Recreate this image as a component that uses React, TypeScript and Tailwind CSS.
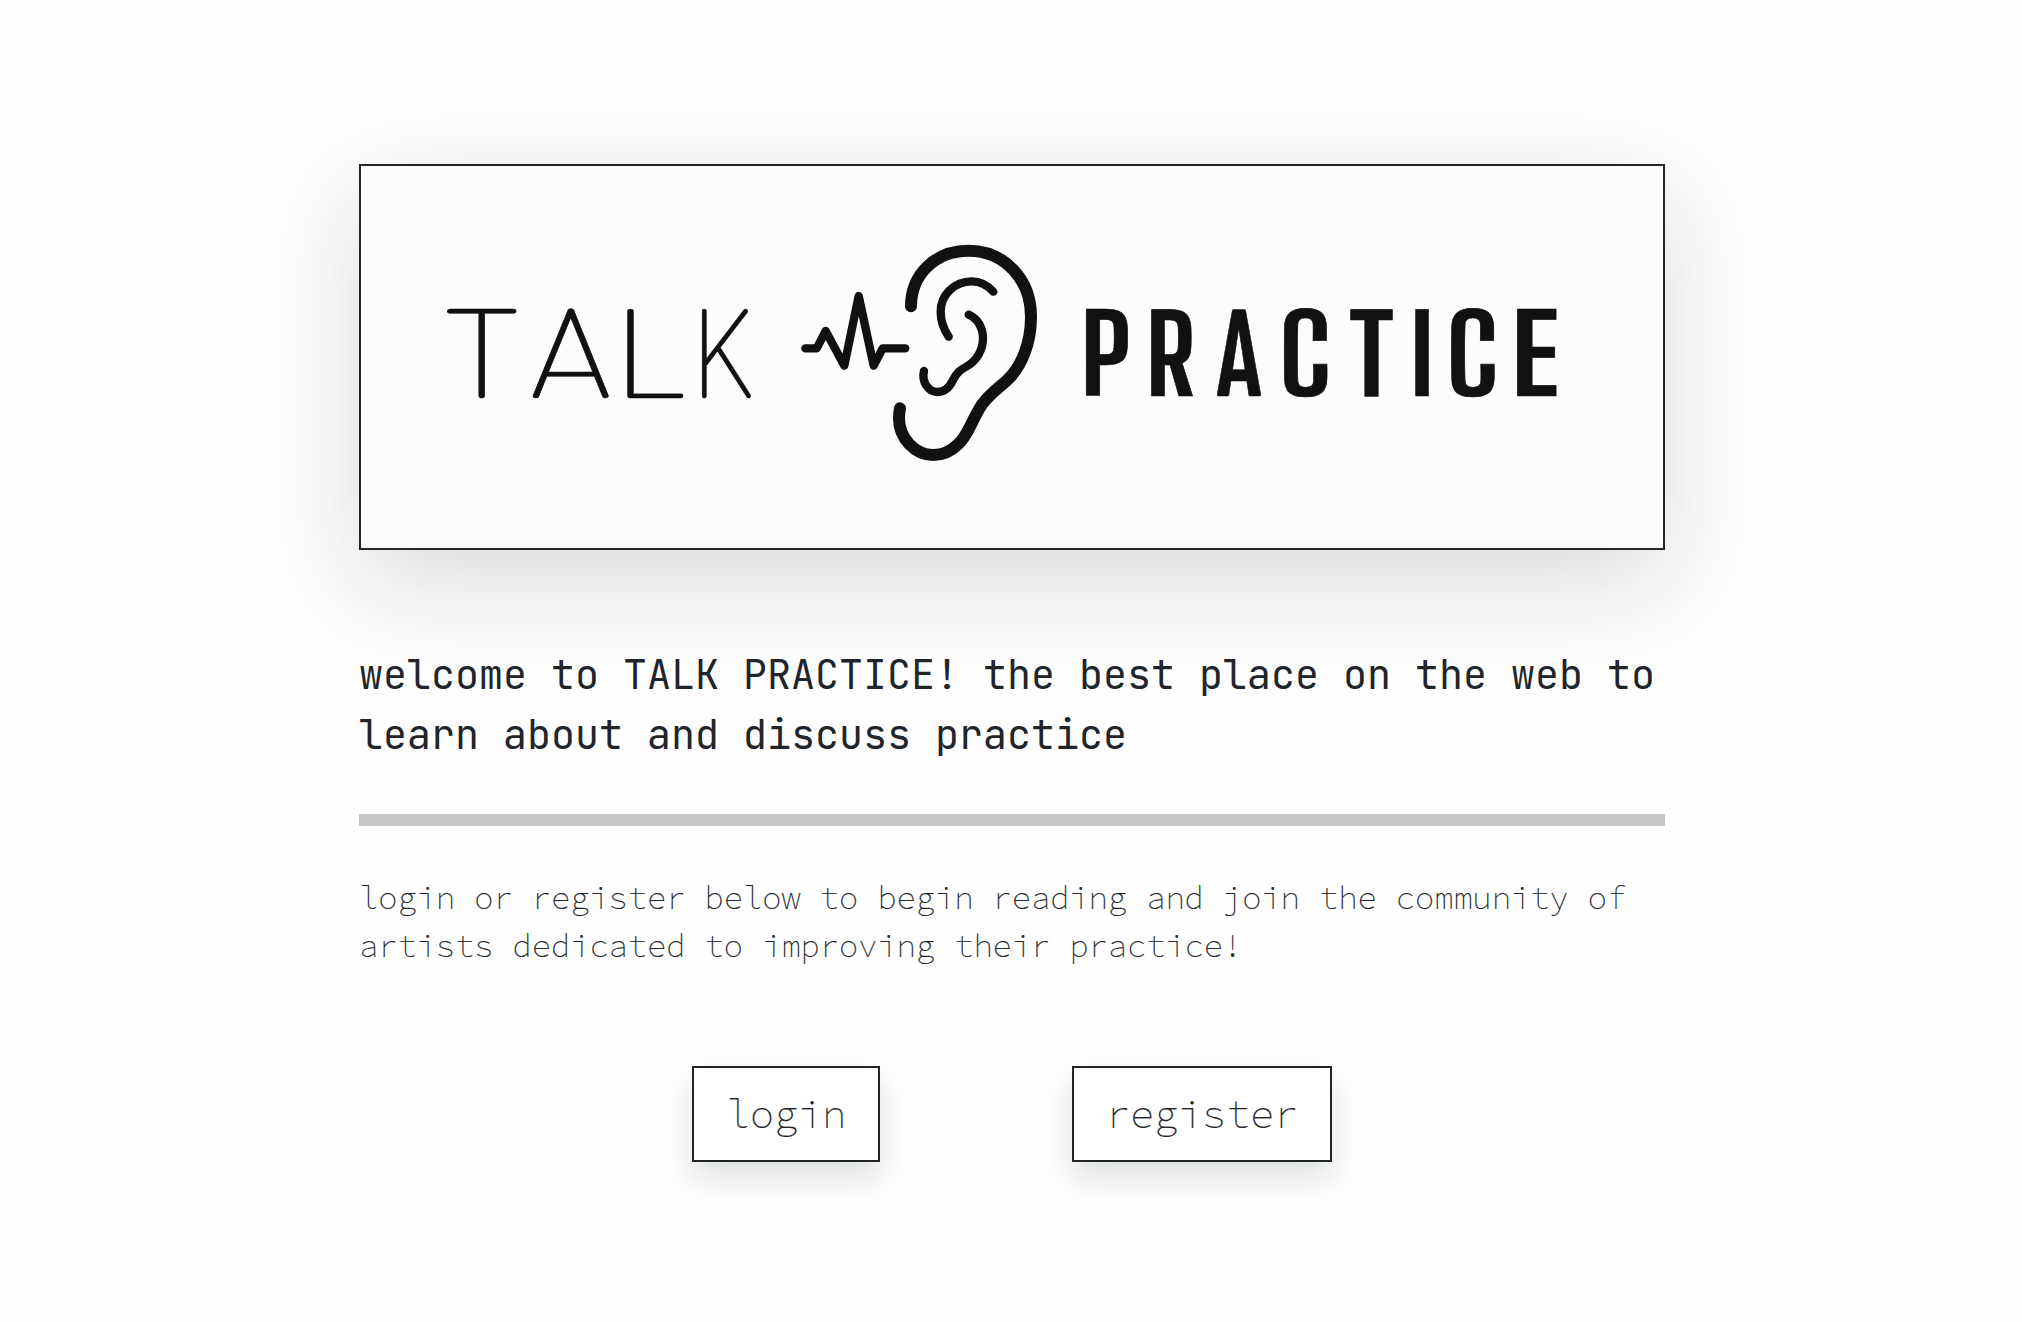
type Letter = { glyph: string; x: number; sx: number };

const talk: Letter[] = [
  { glyph: "T", x: 445, sx: 1.33 },
  { glyph: "A", x: 529, sx: 1.32 },
  { glyph: "L", x: 614.8, sx: 1.285 },
  { glyph: "K", x: 692.5, sx: 0.96 },
];

const practice: (Letter & { face: string })[] = [
  { glyph: "P", x: 1080.5, sx: 1.155, face: "font-['Big_Shoulders_Display','Roboto',sans-serif] text-[107.5px] font-bold" },
  { glyph: "R", x: 1146.1, sx: 1.11, face: "font-['Big_Shoulders_Display','Roboto',sans-serif] text-[107.5px] font-bold" },
  { glyph: "A", x: 1215.8, sx: 0.83, face: "font-['Barlow_Condensed','Roboto',sans-serif] text-[122.6px] font-semibold" },
  { glyph: "C", x: 1279.2, sx: 1.15, face: "font-['Big_Shoulders_Display','Roboto',sans-serif] text-[107.5px] font-bold" },
  { glyph: "T", x: 1350, sx: 1.145, face: "font-['Big_Shoulders_Display','Roboto',sans-serif] text-[107.5px] font-bold" },
  { glyph: "I", x: 1410.2, sx: 1.09, face: "font-['Big_Shoulders_Display','Roboto',sans-serif] text-[107.5px] font-bold" },
  { glyph: "C", x: 1446.5, sx: 1.15, face: "font-['Big_Shoulders_Display','Roboto',sans-serif] text-[107.5px] font-bold" },
  { glyph: "E", x: 1511.3, sx: 1.255, face: "font-['Big_Shoulders_Display','Roboto',sans-serif] text-[107.5px] font-bold" },
];

function Logo() {
  return (
    <svg
      viewBox="361 166 1302 382"
      className="block h-full w-full"
      fill="#111111"
      role="img"
      aria-label="Talk Practice"
    >
      <g
        className="font-['Dosis','Inter',sans-serif] text-[121.3px] font-extralight"
        stroke="#111111"
        strokeWidth="0.5"
        strokeLinejoin="round"
      >
        {talk.map((l) => (
          <text key={l.glyph} transform={`translate(${l.x} 398) scale(${l.sx} 1)`}>
            {l.glyph}
          </text>
        ))}
      </g>
      <g
        transform="translate(780 220) scale(0.33333)"
        fill="none"
        stroke="#111111"
        strokeLinecap="round"
        strokeLinejoin="round"
      >
        <path
          strokeWidth="25"
          d="M76 385H110L137 333L193 437L236 228L281 437L308 385H376"
        />
        <path
          strokeWidth="36"
          d="M393 259C393 165 465 92 565 92C675 92 753 180 753 290C753 370 725 440 680 482C650 508 625 525 605 555C575 600 565 645 535 672C515 692 488 705 460 705C405 705 357 655 357 595C357 582 358 575 360 565"
        />
        <path
          strokeWidth="25"
          d="M640 215C622 195 600 184 575 184C523 184 482 225 482 275C482 302 490 326 506 350"
        />
        <path
          strokeWidth="25"
          d="M566 284C592 295 609 322 609 355C609 390 590 422 562 438C540 450 530 458 518 482C508 503 492 516 472 516C445 516 424 485 432 453"
        />
      </g>
      <g stroke="#111111" strokeWidth="0.6">
        {practice.map((l, i) => (
          <text
            key={i}
            className={l.face}
            transform={`translate(${l.x} 396) scale(${l.sx} 1)`}
          >
            {l.glyph}
          </text>
        ))}
      </g>
    </svg>
  );
}

function ActionButton({ label }: { label: string }) {
  return (
    <button className="border-2 border-[#212529] bg-white px-8 py-4 text-[40px] leading-[60px] font-extralight shadow-[0_16px_32px_rgba(10,25,15,0.13)] [-webkit-text-stroke:0.2px_#212529]">
      {label}
    </button>
  );
}

export default function App() {
  return (
    <main className="min-h-screen bg-[#fefefe] pt-[164px] font-['Source_Code_Pro','Liberation_Mono',monospace] text-[#212529]">
      <div className="ml-[359px] w-[1306px]">
        <div className="h-[386px] border-2 border-[#212529] bg-[#fcfcfc] shadow-[0_32px_96px_rgba(10,25,15,0.155)]">
          <Logo />
        </div>
        <h1 className="mt-[95px] font-['JetBrains_Mono','DejaVu_Sans_Mono',monospace] text-[40px] leading-[60px] font-normal [font-variant-ligatures:none]">
          welcome to TALK PRACTICE! the best place on the web to learn about and discuss practice
        </h1>
        <hr className="mt-[49px] h-3 border-0 bg-[#c7c8ca]" />
        <p className="mt-12 text-[32px] leading-[48px] font-extralight [-webkit-text-stroke:0.2px_#212529]">
          login or register below to begin reading and join the community of artists dedicated to
          improving their practice!
        </p>
        <div className="mt-24 flex gap-48 pl-[333px]">
          <ActionButton label="login" />
          <ActionButton label="register" />
        </div>
      </div>
    </main>
  );
}
